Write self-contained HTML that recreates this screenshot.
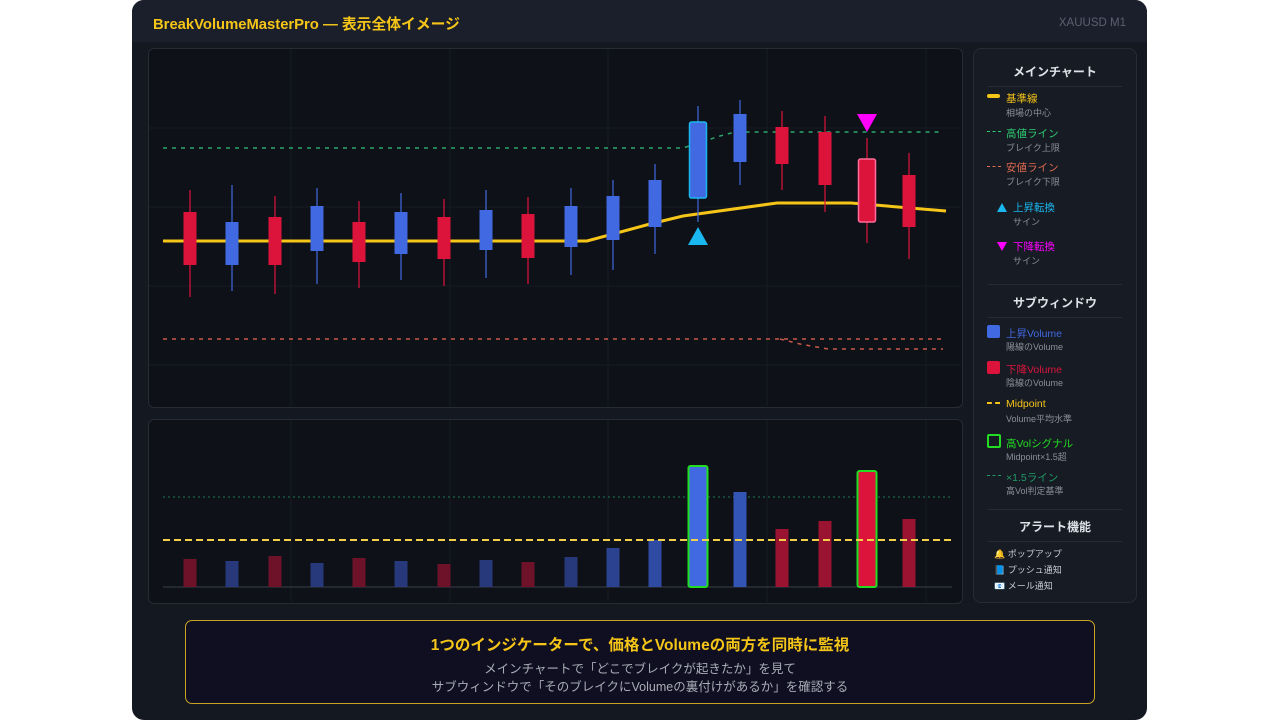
<!DOCTYPE html>
<html><head><meta charset="utf-8"><style>
*{margin:0;padding:0;box-sizing:border-box}
body{width:1280px;height:720px;background:#fff;position:relative;overflow:hidden;font-family:"Liberation Sans","Noto Sans CJK JP",sans-serif}
.card{position:absolute;left:132px;top:0;width:1015px;height:720px;background:#141820;border-radius:12px;overflow:hidden}
.hdr{position:absolute;left:0;top:0;width:100%;height:42px;background:#1b1f2c}
.title{position:absolute;left:21px;top:13px;color:#f5c518;font-weight:bold;font-size:14.8px}
.sym{position:absolute;right:21px;top:17px;color:#5a6070;font-size:11.5px}
.panel{position:absolute;background:#0f1118;border:1px solid #262b36;border-radius:6px}
.side{position:absolute;left:841px;top:48px;width:164px;height:555px;background:#171b24;border:1px solid #262b36;border-radius:8px}
.st{position:absolute;left:14px;width:134px;text-align:center;color:#dfe2e8;font-weight:bold;font-size:12px;border-bottom:1px solid #262b36;padding-bottom:6px}
.it{position:absolute;font-size:10.5px}
.sub{position:absolute;font-size:9px;color:#8a8f9a}
.dots{position:absolute;left:13px;width:14px;height:0;border-top:1.5px dashed}
.box{position:absolute;left:53px;top:620px;width:910px;height:84px;background:#100f22;border:1px solid #c9a422;border-radius:7px;text-align:center}
</style></head><body>
<div class="card">
<div class="hdr"></div>
<div class="title">BreakVolumeMasterPro — 表示全体イメージ</div>
<div class="sym">XAUUSD M1</div>

<div class="panel" style="left:16px;top:48px;width:815px;height:360px"></div>
<div class="panel" style="left:16px;top:419px;width:815px;height:185px"></div>

<svg style="position:absolute;left:-132px;top:0" width="1280" height="720">
<g stroke="#161a22" stroke-width="1">
<line x1="291" y1="49" x2="291" y2="406"/><line x1="450" y1="49" x2="450" y2="406"/><line x1="608" y1="49" x2="608" y2="406"/><line x1="767" y1="49" x2="767" y2="406"/><line x1="926" y1="49" x2="926" y2="406"/>
<line x1="149" y1="128" x2="961" y2="128"/><line x1="149" y1="207" x2="961" y2="207"/><line x1="149" y1="286" x2="961" y2="286"/><line x1="149" y1="365" x2="961" y2="365"/>
<line x1="291" y1="420" x2="291" y2="602"/><line x1="450" y1="420" x2="450" y2="602"/><line x1="608" y1="420" x2="608" y2="602"/><line x1="767" y1="420" x2="767" y2="602"/><line x1="926" y1="420" x2="926" y2="602"/>
</g>
<polyline points="163,148 683,148 720,136 735,132 943,132" fill="none" stroke="#2aa86a" stroke-width="1.5" stroke-dasharray="4,5"/>
<polyline points="163,339 945,339" fill="none" stroke="#c85a4a" stroke-width="1.5" stroke-dasharray="4,5"/>
<polyline points="780,339 800,344 828,349 943,349" fill="none" stroke="#c85a4a" stroke-width="1.5" stroke-dasharray="4,5"/>
<polyline points="163,241 587,241 650,224 683,216 777,203 851,203 946,211" fill="none" stroke="#f5c518" stroke-width="3"/>
<g stroke-width="1.2">
<line x1="190" y1="190" x2="190" y2="297" stroke="#dc143c"/><rect x="183.5" y="212" width="13" height="53" fill="#dc143c"/>
<line x1="232" y1="185" x2="232" y2="291" stroke="#4169e1"/><rect x="225.5" y="222" width="13" height="43" fill="#4169e1"/>
<line x1="275" y1="196" x2="275" y2="294" stroke="#dc143c"/><rect x="268.5" y="217" width="13" height="48" fill="#dc143c"/>
<line x1="317" y1="188" x2="317" y2="284" stroke="#4169e1"/><rect x="310.5" y="206" width="13" height="45" fill="#4169e1"/>
<line x1="359" y1="201" x2="359" y2="288" stroke="#dc143c"/><rect x="352.5" y="222" width="13" height="40" fill="#dc143c"/>
<line x1="401" y1="193" x2="401" y2="280" stroke="#4169e1"/><rect x="394.5" y="212" width="13" height="42" fill="#4169e1"/>
<line x1="444" y1="199" x2="444" y2="286" stroke="#dc143c"/><rect x="437.5" y="217" width="13" height="42" fill="#dc143c"/>
<line x1="486" y1="190" x2="486" y2="278" stroke="#4169e1"/><rect x="479.5" y="210" width="13" height="40" fill="#4169e1"/>
<line x1="528" y1="197" x2="528" y2="284" stroke="#dc143c"/><rect x="521.5" y="214" width="13" height="44" fill="#dc143c"/>
<line x1="571" y1="188" x2="571" y2="275" stroke="#4169e1"/><rect x="564.5" y="206" width="13" height="41" fill="#4169e1"/>
<line x1="613" y1="180" x2="613" y2="270" stroke="#4169e1"/><rect x="606.5" y="196" width="13" height="44" fill="#4169e1"/>
<line x1="655" y1="164" x2="655" y2="254" stroke="#4169e1"/><rect x="648.5" y="180" width="13" height="47" fill="#4169e1"/>
<line x1="698" y1="106" x2="698" y2="222" stroke="#4169e1"/><rect x="689.5" y="122" width="17" height="76" rx="2" fill="#4169e1" stroke="#1ab8f0" stroke-width="1.5"/>
<line x1="740" y1="100" x2="740" y2="185" stroke="#4169e1"/><rect x="733.5" y="114" width="13" height="48" fill="#4169e1"/>
<line x1="782" y1="111" x2="782" y2="190" stroke="#dc143c"/><rect x="775.5" y="127" width="13" height="37" fill="#dc143c"/>
<line x1="825" y1="116" x2="825" y2="212" stroke="#dc143c"/><rect x="818.5" y="132" width="13" height="53" fill="#dc143c"/>
<line x1="867" y1="138" x2="867" y2="243" stroke="#dc143c"/><rect x="858.5" y="159" width="17" height="63" rx="2" fill="#dc143c" stroke="#ff6b9a" stroke-width="1.5"/>
<line x1="909" y1="153" x2="909" y2="259" stroke="#dc143c"/><rect x="902.5" y="175" width="13" height="52" fill="#dc143c"/>
</g>
<polygon points="698,227 708,245 688,245" fill="#1ab8f0"/>
<polygon points="857,114 877,114 867,132" fill="#ff00ff"/>
<!-- volume -->
<line x1="163" y1="497" x2="952" y2="497" stroke="#1f7a55" stroke-width="1" stroke-dasharray="2,3"/>
<line x1="163" y1="587" x2="952" y2="587" stroke="#3a3f4a" stroke-width="1"/>
<g>
<rect x="183.5" y="559" width="13" height="28" fill="#6e1229"/>
<rect x="225.5" y="561" width="13" height="26" fill="#27397a"/>
<rect x="268.5" y="556" width="13" height="31" fill="#6e1229"/>
<rect x="310.5" y="563" width="13" height="24" fill="#27397a"/>
<rect x="352.5" y="558" width="13" height="29" fill="#6e1229"/>
<rect x="394.5" y="561" width="13" height="26" fill="#27397a"/>
<rect x="437.5" y="564" width="13" height="23" fill="#6e1229"/>
<rect x="479.5" y="560" width="13" height="27" fill="#27397a"/>
<rect x="521.5" y="562" width="13" height="25" fill="#6e1229"/>
<rect x="564.5" y="557" width="13" height="30" fill="#27397a"/>
<rect x="606.5" y="548" width="13" height="39" fill="#2a4290"/>
<rect x="648.5" y="540" width="13" height="47" fill="#2e4aa3"/>
<rect x="688.5" y="466" width="19" height="121" rx="2" fill="#4169e1" stroke="#22dd22" stroke-width="2"/>
<rect x="733.5" y="492" width="13" height="95" fill="#3355b5"/>
<rect x="775.5" y="529" width="13" height="58" fill="#9a1432"/>
<rect x="818.5" y="521" width="13" height="66" fill="#9a1432"/>
<rect x="857.5" y="471" width="19" height="116" rx="2" fill="#dc143c" stroke="#22dd22" stroke-width="2"/>
<rect x="902.5" y="519" width="13" height="68" fill="#9a1432"/>
</g>
<line x1="163" y1="540" x2="952" y2="540" stroke="#f2d04a" stroke-width="2" stroke-dasharray="7,4"/>
</svg>

<div class="side">
<div class="st" style="top:14px">メインチャート</div>
<div style="position:absolute;left:13px;top:45px;width:13px;height:4px;background:#f5c518;border-radius:2px"></div>
<div class="it" style="left:32px;top:42px;color:#f5c518">基準線</div><div class="sub" style="left:32px;top:57px">相場の中心</div>
<div class="dots" style="top:82px;border-color:#2ecc71"></div>
<div class="it" style="left:32px;top:77px;color:#2ecc71">高値ライン</div><div class="sub" style="left:32px;top:92px">ブレイク上限</div>
<div class="dots" style="top:117px;border-color:#e06a50"></div>
<div class="it" style="left:32px;top:111px;color:#e06a50">安値ライン</div><div class="sub" style="left:32px;top:126px">ブレイク下限</div>
<svg style="position:absolute;left:22px;top:153px" width="12" height="12"><polygon points="6,1 11,10 1,10" fill="#1ab8f0"/></svg>
<svg style="position:absolute;left:22px;top:192px" width="12" height="12"><polygon points="1,1 11,1 6,10" fill="#ff00ff"/></svg>
<div class="it" style="left:39px;top:151px;color:#1ab8f0">上昇転換</div><div class="sub" style="left:39px;top:166px">サイン</div>
<div class="it" style="left:39px;top:190px;color:#ff00ff">下降転換</div><div class="sub" style="left:39px;top:205px">サイン</div>
<div style="position:absolute;left:14px;top:235px;width:134px;border-top:1px solid #262b36"></div>
<div class="st" style="top:245px">サブウィンドウ</div>
<div style="position:absolute;left:13px;top:276px;width:13px;height:13px;background:#4169e1;border-radius:2px"></div>
<div class="it" style="left:32px;top:277px;color:#4169e1">上昇Volume</div><div class="sub" style="left:32px;top:291px">陽線のVolume</div>
<div style="position:absolute;left:13px;top:312px;width:13px;height:13px;background:#dc143c;border-radius:2px"></div>
<div class="it" style="left:32px;top:313px;color:#dc143c">下降Volume</div><div class="sub" style="left:32px;top:327px">陰線のVolume</div>
<div style="position:absolute;left:13px;top:353px;width:13px;height:2px;border-top:2px dashed #f5c518"></div>
<div class="it" style="left:32px;top:349px;color:#f5c518">Midpoint</div><div class="sub" style="left:32px;top:363px">Volume平均水準</div>
<div style="position:absolute;left:13px;top:385px;width:14px;height:14px;border:2px solid #22dd22;border-radius:2px"></div>
<div class="it" style="left:32px;top:387px;color:#22dd22">高Volシグナル</div><div class="sub" style="left:32px;top:401px">Midpoint×1.5超</div>
<div class="dots" style="top:426px;border-color:#1f9a65"></div>
<div class="it" style="left:32px;top:421px;color:#1f9a65">×1.5ライン</div><div class="sub" style="left:32px;top:435px">高Vol判定基準</div>
<div style="position:absolute;left:14px;top:460px;width:134px;border-top:1px solid #262b36"></div>
<div class="st" style="top:469px">アラート機能</div>
<div class="sub" style="left:20px;top:498px;color:#c8ccd4">🔔 ポップアップ</div>
<div class="sub" style="left:20px;top:514px;color:#c8ccd4">📘 プッシュ通知</div>
<div class="sub" style="left:20px;top:530px;color:#c8ccd4">📧 メール通知</div>
</div>

<div class="box">
<div style="margin-top:12px;color:#f5c518;font-weight:bold;font-size:15.5px">1つのインジケーターで、価格とVolumeの両方を同時に監視</div>
<div style="margin-top:5px;color:#a8acb5;font-size:12.5px;line-height:18px">メインチャートで「どこでブレイクが起きたか」を見て<br>サブウィンドウで「そのブレイクにVolumeの裏付けがあるか」を確認する</div>
</div>
</div>
</body></html>
